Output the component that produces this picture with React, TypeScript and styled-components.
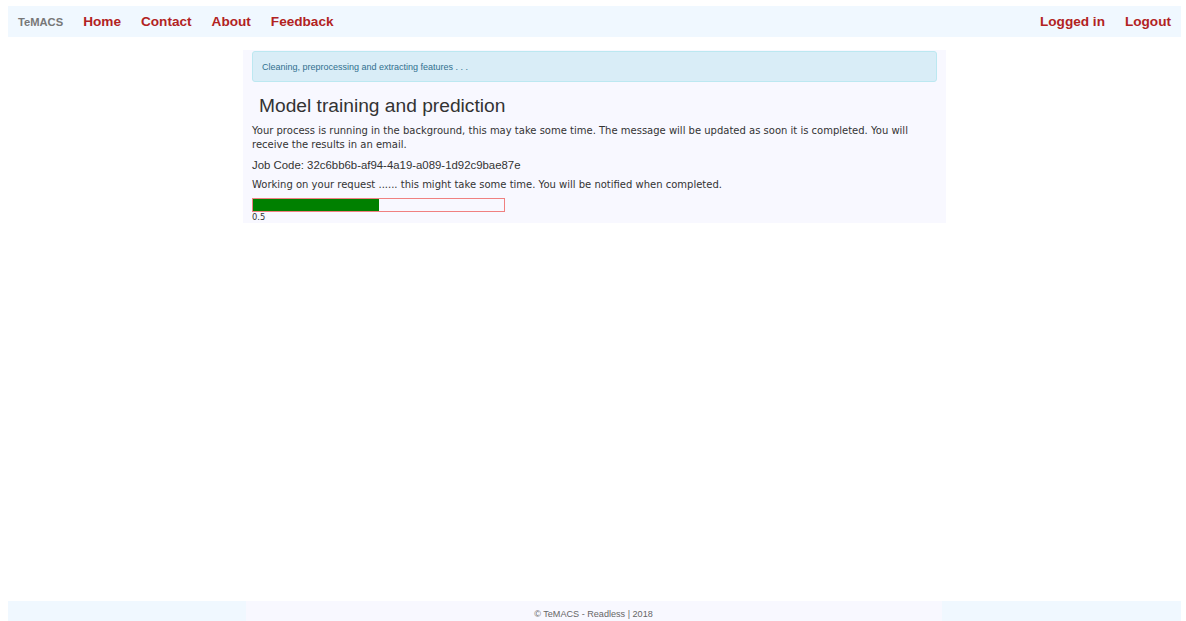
import styled, { createGlobalStyle } from 'styled-components';

const GlobalStyle = createGlobalStyle`
  html, body {
    margin: 0;
    padding: 0;
    background: #ffffff;
  }
  body {
    font-family: "Liberation Sans", Arial, sans-serif;
    color: #333333;
  }
`;

const Page = styled.div`
  min-height: 100vh;
  display: flex;
  flex-direction: column;
  padding: 6px 5px 0 8px;
  box-sizing: border-box;
`;

const NavBar = styled.nav`
  display: flex;
  align-items: center;
  justify-content: space-between;
  height: 31px;
  background: aliceblue;
  padding: 0 0 0 10px;
`;

const NavGroup = styled.div`
  display: flex;
  align-items: center;
`;

const Brand = styled.a`
  font-family: "Liberation Sans", Arial, sans-serif;
  font-size: 11.2px;
  font-weight: bold;
  color: #777777;
  text-decoration: none;
  padding-right: 10px;
`;

const NavLink = styled.a`
  font-family: "Liberation Sans", Arial, sans-serif;
  font-size: 13.6px;
  font-weight: bold;
  color: firebrick;
  text-decoration: none;
  padding: 0 10px;
`;

const Main = styled.main`
  width: 685px;
  margin: 13px auto 0;
  padding: 1px 9px 0;
  background: ghostwhite;
  font-family: "DejaVu Sans", Verdana, sans-serif;
`;

const Alert = styled.div`
  height: 29px;
  display: flex;
  align-items: center;
  padding: 0 9px;
  background: #d9edf7;
  border: 1px solid #bce8f1;
  border-radius: 3px;
  color: #31708f;
  font-family: "Liberation Sans", Arial, sans-serif;
  font-size: 9px;
`;

const Heading = styled.h2`
  margin: 13px 0 7px 7px;
  font-family: "Liberation Sans", Arial, sans-serif;
  font-weight: normal;
  font-size: 19.2px;
  line-height: 22px;
  color: #333333;
`;

const Text = styled.p`
  margin: 6px 0 0;
  font-size: 10px;
  line-height: 14px;
  color: #333333;
`;

const JobCode = styled(Text)`
  font-family: "Liberation Sans", Arial, sans-serif;
  font-size: 11.4px;
`;

const Progress = styled.div`
  margin-top: 6px;
  width: 251px;
  height: 12px;
  border: 1px solid #f08080;
`;

const ProgressFill = styled.div`
  height: 100%;
  background: green;
`;

const ProgressValue = styled.div`
  font-size: 8.4px;
  line-height: 11px;
  color: #333333;
`;

const Footer = styled.footer`
  margin-top: auto;
  height: 20px;
  background: aliceblue;
  display: flex;
  justify-content: center;
`;

const FooterInner = styled.div`
  width: 696px;
  margin-left: -2px;
  background: ghostwhite;
  display: flex;
  align-items: center;
  justify-content: center;
  font-family: "Liberation Sans", Arial, sans-serif;
  font-size: 9.1px;
  color: #666666;
  padding-top: 6px;
`;

const progress = 0.5;

export default function App() {
  return (
    <Page>
      <GlobalStyle />
      <NavBar>
        <NavGroup>
          <Brand href="#">TeMACS</Brand>
          <NavLink href="#">Home</NavLink>
          <NavLink href="#">Contact</NavLink>
          <NavLink href="#">About</NavLink>
          <NavLink href="#">Feedback</NavLink>
        </NavGroup>
        <NavGroup>
          <NavLink href="#">Logged in</NavLink>
          <NavLink href="#">Logout</NavLink>
        </NavGroup>
      </NavBar>

      <Main>
        <Alert>Cleaning, preprocessing and extracting features . . .</Alert>
        <Heading>Model training and prediction</Heading>
        <Text>
          Your process is running in the background, this may take some time. The message will be
          updated as soon it is completed. You will receive the results in an email.
        </Text>
        <JobCode>Job Code: 32c6bb6b-af94-4a19-a089-1d92c9bae87e</JobCode>
        <Text>
          Working on your request ...... this might take some time. You will be notified when
          completed.
        </Text>
        <Progress>
          <ProgressFill style={{ width: `${progress * 100}%` }} />
        </Progress>
        <ProgressValue>{progress}</ProgressValue>
      </Main>

      <Footer>
        <FooterInner>© TeMACS - Readless | 2018</FooterInner>
      </Footer>
    </Page>
  );
}
